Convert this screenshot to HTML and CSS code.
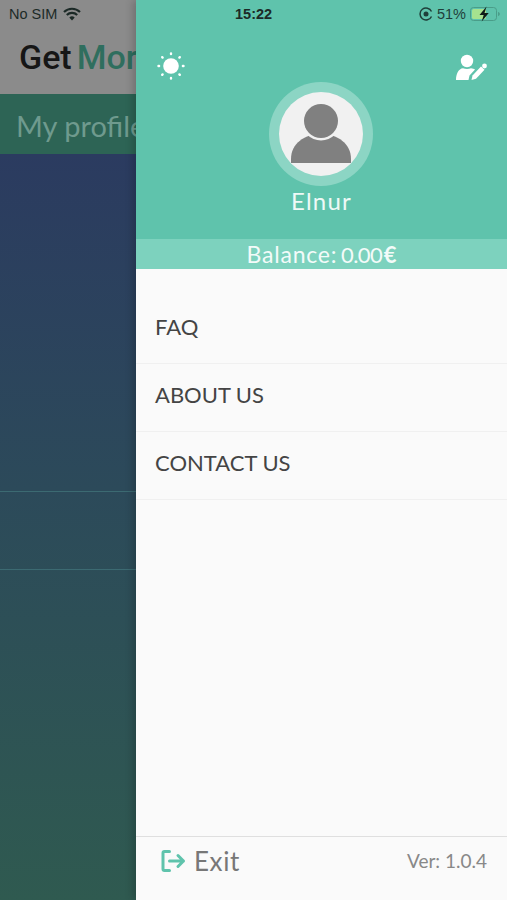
FILE: index.html
```html
<!DOCTYPE html>
<html lang="en">
<head>
    <meta charset="UTF-8">
    <meta name="viewport" content="width=device-width, initial-scale=1.0">
    <title>GetMore</title>
    <link rel="stylesheet" href="styles.css">
</head>
<body>
    <div class="screen">
        <div class="backdrop">
            <div class="brand"><span class="brand-get">Get</span><span class="brand-more">More</span></div>
            <div class="page-title">My profile</div>
            <div class="backdrop-list">
                <div class="backdrop-row"></div>
                <div class="backdrop-row"></div>
            </div>
        </div>

        <div class="drawer">
            <div class="drawer-head">
                <div class="head-icons">
                    <svg class="icon-sun" width="28" height="28" viewBox="0 0 28 28">
                        <circle cx="14" cy="14" r="7.800" fill="#fff"/>
                        <g stroke="#fff" stroke-width="2.400" stroke-linecap="round">
                            <path d="M14 1.500v.6M14 25.900v.6M1.500 14h.6M25.900 14h.6M5.200 5.200l.4.4M22.400 22.400l.4.4M5.200 22.800l.4-.4M22.400 5.600l.4-.4"/>
                        </g>
                    </svg>
                    <svg class="icon-edit" width="32" height="28" viewBox="0 0 32 28">
                        <circle cx="11" cy="9" r="6.200" fill="#fff"/>
                        <path d="M0 28c0-6 2.500-11.500 7-11.800c2.500 1 5.500 1 8 0c1.500 .1 3 .6 4 1.400l-5.500 6l-1 4.400z" fill="#fff"/>
                        <path d="M15.500 28l1-4.600l8.500-9l3.500 3.300l-8.500 9z" fill="#fff"/>
                        <circle cx="28.500" cy="14" r="2.400" fill="#fff"/>
                    </svg>
                </div>
                <div class="avatar-ring">
                    <div class="avatar">
                        <svg width="84" height="84" viewBox="0 0 84 84">
                            <path d="M12 71v-4c0-15 13-25 30-25s30 10 30 25v4z" fill="#808080"/>
                            <circle cx="42" cy="29" r="19.500" fill="#f1f1f1"/>
                            <circle cx="42" cy="29" r="17" fill="#808080"/>
                        </svg>
                    </div>
                </div>
                <div class="user-name">Elnur</div>
            </div>
            <div class="balance"><span class="balance-label">Balance:</span> <span class="balance-sum">0.00</span> <b>€</b></div>

            <ul class="menu">
                <li>FAQ</li>
                <li>ABOUT US</li>
                <li>CONTACT US</li>
            </ul>

            <div class="drawer-foot">
                <div class="exit">
                    <svg width="26" height="24" viewBox="0 0 26 24" fill="none" stroke="#5fc3ac" stroke-width="3" stroke-linecap="round" stroke-linejoin="round">
                        <path d="M8.500 2.500H3.500a1.500 1.500 0 0 0-1.500 1.500v16a1.500 1.500 0 0 0 1.500 1.500h5"/>
                        <path d="M8.500 12h14M17 6.500l5.500 5.500l-5.500 5.500"/>
                    </svg>
                    <span>Exit</span>
                </div>
                <div class="version">Ver: 1.0.4</div>
            </div>
        </div>

        <div class="status-bar">
            <div class="status-left">
                <span>No SIM</span>
                <svg width="18" height="14" viewBox="0 0 18 14" fill="none" stroke="#1c2a27" stroke-width="2.200">
                    <path d="M1 5a11.500 11.500 0 0 1 16 0"/>
                    <path d="M3.800 8a7.500 7.500 0 0 1 10.400 0"/>
                    <path d="M9 13.500l-2.700-3a3.800 3.800 0 0 1 5.400 0z" fill="#1c2a27" stroke="none"/>
                </svg>
            </div>
            <div class="status-time">15:22</div>
            <div class="status-right">
                <svg width="14" height="14" viewBox="0 0 14 14" fill="none" stroke="#1f3f3a" stroke-width="1.500">
                    <path d="M12.500 9.500a6 6 0 1 1 0-5"/>
                    <circle cx="7" cy="7" r="2.500" fill="#1f3f3a" stroke="none"/>
                </svg>
                <span>51%</span>
                <svg width="31" height="16" viewBox="0 0 31 16">
                    <rect x="0.500" y="1.500" width="26" height="13" rx="3" fill="none" stroke="#4a9d89"/>
                    <rect x="2" y="3" width="14" height="10" rx="1.500" fill="#a6e28f"/>
                    <path d="M28 6c1.200.3 1.800 1 1.800 2s-.6 1.700-1.800 2z" fill="#4a9d89"/>
                    <path d="M16.500 .5l-7 8.500h4.200l-2 6.500l7-8.500h-4.200z" fill="#0e1c18"/>
                </svg>
            </div>
        </div>
    </div>
</body>
</html>
```

FILE: styles.css
```css
* {
    box-sizing: border-box;
}
body {
    margin: 0;
    background: #fafafa;
    font-family: Lato, "Open Sans", sans-serif;
    overflow: hidden;
}
.screen {
    position: relative;
    display: flex;
    width: 507px;
    height: 900px;
    overflow: hidden;
}

/* dimmed page behind the drawer */
.backdrop {
    display: flex;
    flex-direction: column;
    width: 136px;
    flex-shrink: 0;
    overflow: hidden;
}
.brand {
    height: 94px;
    padding: 38px 0 0 19px;
    background: #8b8b8b;
    font-family: Roboto, "Liberation Sans", sans-serif;
    font-size: 34px;
    font-weight: 500;
    line-height: 38px;
    white-space: nowrap;
}
.brand-get {
    color: #161616;
}
.brand-more {
    margin-left: 5px;
    color: #2f6e5e;
}
.page-title {
    height: 60px;
    padding: 14px 0 0 16px;
    background: #2d6455;
    color: #6f9a8e;
    font-size: 29px;
    line-height: 36px;
    white-space: nowrap;
}
.backdrop-list {
    flex: 1;
    padding-top: 337px;
    background: linear-gradient(to bottom, #2b3b60, #2c4a5a 45%, #2f5a50);
}
.backdrop-row {
    height: 78px;
    border-top: 1px solid #3c6a72;
}

/* drawer */
.drawer {
    z-index: 1;
    display: flex;
    flex-direction: column;
    flex: 1;
    background: #fafafa;
    box-shadow: -3px 0 8px rgba(0, 0, 0, 0.2);
}
.drawer-head {
    height: 239px;
    padding-top: 46px;
    background: #5fc3ac;
}
.head-icons {
    display: flex;
    justify-content: space-between;
    align-items: center;
    height: 40px;
    padding: 0 19px 0 21px;
}
.avatar-ring {
    display: flex;
    justify-content: center;
    align-items: center;
    width: 104px;
    height: 104px;
    margin: -4px 0 0 133px;
    border-radius: 50%;
    background: #8cd5c4;
}
.avatar {
    width: 84px;
    height: 84px;
    border-radius: 50%;
    background: #f1f1f1;
    overflow: hidden;
}
.avatar svg {
    display: block;
}
.user-name {
    color: #eef9f6;
    font-size: 24px;
    line-height: 30px;
    letter-spacing: 1.2px;
    text-align: center;
}
.balance {
    height: 30px;
    background: #7dd2be;
    color: #f3fbf9;
    font-size: 22px;
    line-height: 30px;
    text-align: center;
    word-spacing: -2px;
}
.balance-label {
    font-size: 23px;
    letter-spacing: 0.8px;
}
.balance-sum {
    letter-spacing: -0.6px;
}
.balance b {
    margin-left: -2px;
    font-weight: 700;
}
.menu {
    flex: 1;
    margin: 0;
    padding: 27px 0 0;
    list-style: none;
}
.menu li {
    height: 68px;
    padding: 17px 0 0 19px;
    border-bottom: 1px solid #f0f0f0;
    color: #444;
    font-size: 22px;
    line-height: 28px;
}
.drawer-foot {
    display: flex;
    justify-content: space-between;
    align-items: center;
    height: 64px;
    padding: 0 20px 16px 25px;
    border-top: 1px solid #dfdfdf;
}
.exit {
    display: flex;
    align-items: center;
    gap: 7px;
    color: #777;
    font-size: 26px;
    letter-spacing: 0.6px;
}
.version {
    color: #888;
    font-size: 19px;
}

/* phone status bar, sits over both panes */
.status-bar {
    position: absolute;
    z-index: 2;
    top: 0;
    left: 0;
    right: 0;
    display: flex;
    justify-content: space-between;
    align-items: center;
    height: 27px;
    padding: 0 6px 0 9px;
    font-family: "Liberation Sans", Arial, sans-serif;
    font-size: 14.500px;
    color: #1c2a27;
}
.status-left {
    display: flex;
    align-items: center;
    gap: 6px;
}
.status-time {
    position: absolute;
    left: 235px;
    font-weight: 700;
}
.status-right {
    display: flex;
    align-items: center;
    gap: 4px;
    color: #1f3f3a;
}
```
